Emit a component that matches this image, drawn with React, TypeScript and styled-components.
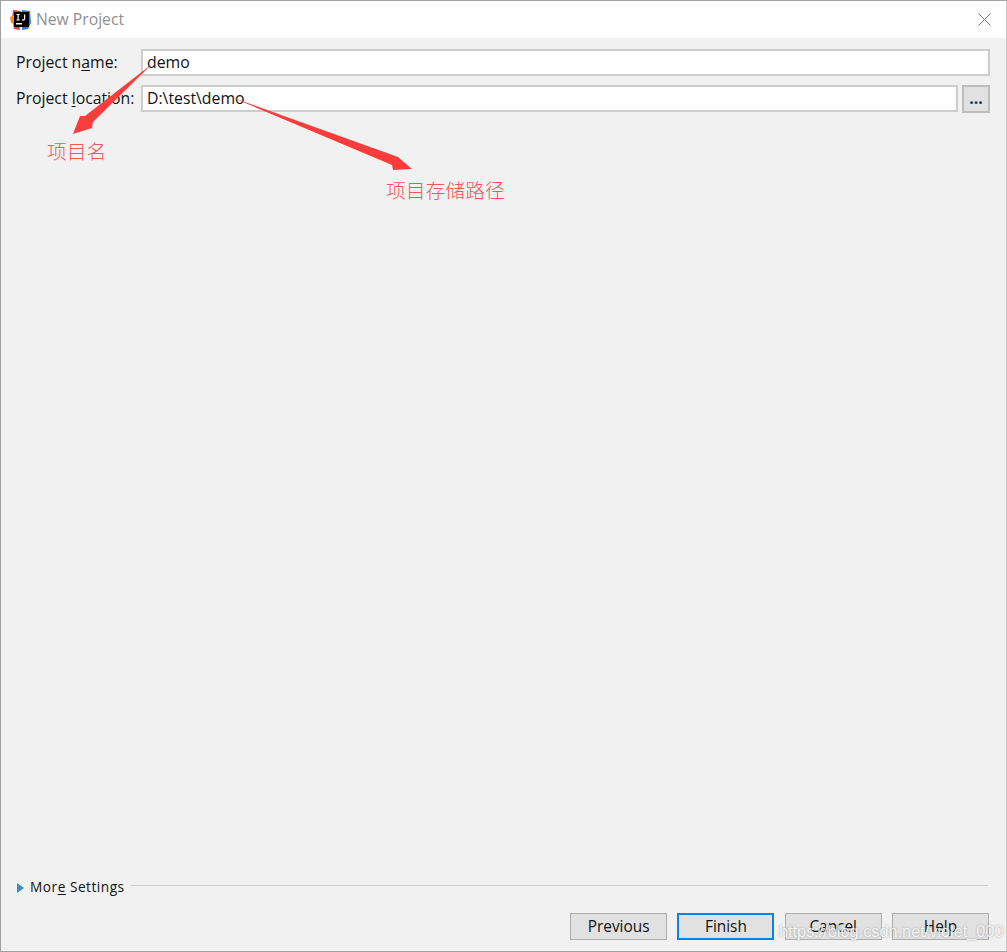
import React from "react";
import styled, { createGlobalStyle } from "styled-components";

const Global = createGlobalStyle`
  html, body { margin: 0; padding: 0; background: #f1f1f1; }
  #root { width: 1007px; height: 952px; }
`;

const Window = styled.div`
  position: relative;
  width: 1007px;
  height: 952px;
  box-sizing: border-box;
  border: 1px solid #a0a0a0;
  border-right-color: #c8c8c8;
  display: flex;
  flex-direction: column;
  background: #f1f1f1;
  overflow: hidden;
  font-family: "Open Sans", "Noto Sans", sans-serif;
  font-size: 15.8px;
  color: #111;
`;

const TitleBar = styled.div`
  height: 37px;
  box-sizing: border-box;
  background: #fff;
  display: flex;
  align-items: center;
  padding: 0 15px 0 9px;
  gap: 4px;
  flex-shrink: 0;
`;

const Title = styled.span`
  flex: 1;
  color: #8f8f8f;
  font-size: 15.7px;
  line-height: 20px;
  margin-bottom: 2px;
`;

const Body = styled.div`
  flex: 1;
  display: flex;
  flex-direction: column;
  padding: 11px 16px 11px 15px;
`;

const Form = styled.div`
  display: grid;
  grid-template-columns: 125px 1fr;
  row-gap: 9px;
  flex: 1;
  align-content: start;
`;

const Label = styled.label`
  display: flex;
  align-items: center;
  height: 27px;
  padding-bottom: 2px;
  box-sizing: border-box;
  white-space: pre;
`;

const Key = styled.span`
  text-decoration: underline;
  text-underline-offset: 2px;
`;

const Field = styled.div`
  flex: 1;
  height: 27px;
  box-sizing: border-box;
  background: #fff;
  border: 2px solid #cdcdcd;
  display: flex;
  align-items: center;
  padding: 0 0 2px 4px;
`;

const FieldRow = styled.div`
  display: flex;
  gap: 4px;
`;

const Browse = styled.button`
  width: 28px;
  height: 28px;
  padding: 0 0 1px;
  box-sizing: border-box;
  background: #e1e1e1;
  border: 2px solid #bdbdbd;
  font: inherit;
  font-weight: 700;
  color: #0a3a6a;
  line-height: 1;
`;

const Disclosure = styled.div`
  display: flex;
  align-items: center;
  height: 16px;
  margin-bottom: 18px;
`;

const Triangle = styled.svg`
  width: 7px;
  height: 10px;
  margin: 2px 6px 0 1px;
`;

const DisclosureText = styled.span`
  letter-spacing: 0.5px;
  font-size: 13.7px;
  margin-bottom: 2px;
`;

const Rule = styled.div`
  flex: 1;
  height: 1px;
  background: #cdcdcd;
  margin: 0 2px 4px 6px;
`;

const Footer = styled.div`
  display: flex;
  justify-content: flex-end;
  gap: 10.3px;
  padding-right: 1px;
`;

const Button = styled.button<{ $primary?: boolean }>`
  width: 97px;
  height: 27px;
  padding: 0;
  box-sizing: border-box;
  background: #e1e1e1;
  border: ${(p) => (p.$primary ? "2px solid #0a84e0" : "1px solid #adadad")};
  font: inherit;
  font-size: 15.4px;
  color: #111;
`;

const Overlay = styled.svg`
  position: absolute;
  left: -1px;
  top: -1px;
  width: 1007px;
  height: 952px;
  pointer-events: none;
`;

const Note = styled.div<{ $x: number; $y: number }>`
  position: absolute;
  left: ${(p) => p.$x}px;
  top: ${(p) => p.$y}px;
  font-family: "Noto Sans CJK SC", sans-serif;
  font-weight: 300;
  font-size: 19.8px;
  line-height: 24px;
  color: #f5555c;
  white-space: nowrap;
`;

const Watermark = styled.div`
  position: absolute;
  left: 778px;
  top: 918px;
  font-family: "Liberation Sans", Arial, sans-serif;
  font-size: 16.3px;
  line-height: 24px;
  color: rgba(255, 255, 255, 0.85);
  text-shadow: 0 0 2px rgba(120, 120, 120, 0.7);
  white-space: nowrap;
`;

const Logo = () => (
  <svg width="22" height="22" viewBox="0 0 22 22">
    <path d="M3 1 L11 2 L10 12 L2 10 Z" fill="#f5326e" />
    <path d="M0 8 L6 6 L6 15 L1 14 Z" fill="#f98a1e" />
    <path d="M3 14 L9 14 L10 21 L4 20 Z" fill="#f5326e" />
    <path d="M12 1 L20 2 L21 14 L18 20 L12 21 Z" fill="#1a84e8" />
    <rect x="4" y="3" width="15" height="15" fill="#000" />
    <rect x="6" y="14" width="6" height="1.5" fill="#fff" />
    <path d="M6.5 5.5h3.2M8.1 5.5v5.5M6.5 11h3.2M14.6 5.5v4.6c0 1.2-1.7 1.2-2.6.4" stroke="#fff" strokeWidth="1.2" fill="none" />
  </svg>
);

const CloseIcon = () => (
  <svg width="13" height="13" viewBox="0 0 13 13">
    <path d="M.5.5l12 12M12.5.5l-12 12" stroke="#777" strokeWidth="1" fill="none" />
  </svg>
);

export default function App() {
  return (
    <>
      <Global />
      <Window>
        <TitleBar>
          <Logo />
          <Title>New Project</Title>
          <CloseIcon />
        </TitleBar>
        <Body>
          <Form>
            <Label>Project n<Key>a</Key>me:</Label>
            <Field>demo</Field>
            <Label>Project <Key>l</Key>ocation:</Label>
            <FieldRow>
              <Field>D:\test\demo</Field>
              <Browse>...</Browse>
            </FieldRow>
          </Form>
          <Disclosure>
            <Triangle viewBox="0 0 7 10">
              <path d="M0 0L7 5L0 10Z" fill="#3d8cc4" />
            </Triangle>
            <DisclosureText>Mor<Key>e</Key> Settings</DisclosureText>
            <Rule />
          </Disclosure>
          <Footer>
            <Button>Previous</Button>
            <Button $primary>Finish</Button>
            <Button>Cancel</Button>
            <Button>Help</Button>
          </Footer>
        </Body>
        <Overlay viewBox="0 0 1007 952">
          <path d="M152 64 L93 122 L92 128 L73 134 L80 116 L85 116 Z" fill="#fb3c3c" />
          <path d="M231 97 L398 157 L412 169 L393 170 L392 165 Z" fill="#fb3c3c" />
        </Overlay>
        <Note $x={46} $y={138}>项目名</Note>
        <Note $x={385} $y={177}>项目存储路径</Note>
        <Watermark>https://blog.csdn.net/violet_000</Watermark>
      </Window>
    </>
  );
}
